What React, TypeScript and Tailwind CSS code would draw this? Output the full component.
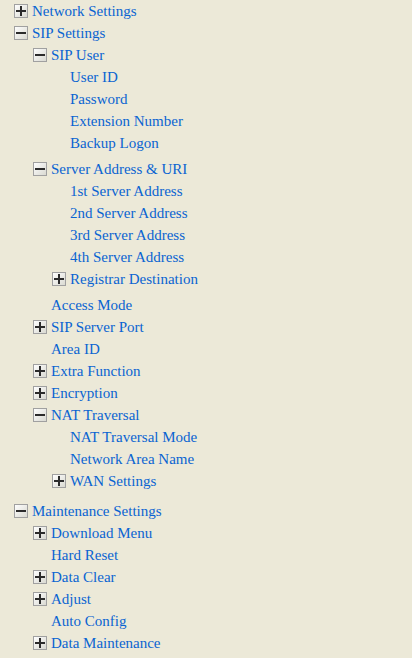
type Node = {
  label: string
  open?: boolean
  children?: Node[]
  leaf?: boolean
}

const tree: Node[] = [
  { label: 'Network Settings', open: false },
  {
    label: 'SIP Settings',
    open: true,
    children: [
      {
        label: 'SIP User',
        open: true,
        children: [
          { label: 'User ID', leaf: true },
          { label: 'Password', leaf: true },
          { label: 'Extension Number', leaf: true },
          { label: 'Backup Logon', leaf: true },
        ],
      },
      {
        label: 'Server Address & URI',
        open: true,
        children: [
          { label: '1st Server Address', leaf: true },
          { label: '2nd Server Address', leaf: true },
          { label: '3rd Server Address', leaf: true },
          { label: '4th Server Address', leaf: true },
          { label: 'Registrar Destination', open: false },
        ],
      },
      { label: 'Access Mode', leaf: true },
      { label: 'SIP Server Port', open: false },
      { label: 'Area ID', leaf: true },
      { label: 'Extra Function', open: false },
      { label: 'Encryption', open: false },
      {
        label: 'NAT Traversal',
        open: true,
        children: [
          { label: 'NAT Traversal Mode', leaf: true },
          { label: 'Network Area Name', leaf: true },
          { label: 'WAN Settings', open: false },
        ],
      },
    ],
  },
  {
    label: 'Maintenance Settings',
    open: true,
    children: [
      { label: 'Download Menu', open: false },
      { label: 'Hard Reset', leaf: true },
      { label: 'Data Clear', open: false },
      { label: 'Adjust', open: false },
      { label: 'Auto Config', leaf: true },
      { label: 'Data Maintenance', open: false },
    ],
  },
]

function ToggleIcon({ open }: { open: boolean }) {
  return (
    <svg width="14" height="14" viewBox="0 0 14 14" className="shrink-0">
      <defs>
        <linearGradient id="tg" x1="0" y1="0" x2="1" y2="1">
          <stop offset="0" stopColor="#ffffff" />
          <stop offset="1" stopColor="#d8d8d0" />
        </linearGradient>
      </defs>
      <rect x="0.5" y="0.5" width="13" height="13" fill="url(#tg)" stroke="#a0a0a0" />
      <rect x="2" y="6" width="10" height="2" fill="#2b2b2b" />
      {!open && <rect x="6" y="2" width="2" height="10" fill="#2b2b2b" />}
    </svg>
  )
}

function TreeItem({ node, level }: { node: Node; level: number }) {
  const pad = ['pl-[14px]', 'pl-[33px]', 'pl-[52px]'][level]
  return (
    <li>
      <div className={`flex items-center h-[22px] ${pad}`}>
        {node.leaf ? (
          <span className="w-[14px] shrink-0" />
        ) : (
          <ToggleIcon open={!!node.open} />
        )}
        <a className="ml-[4px] text-[#0a64d2] whitespace-nowrap cursor-pointer">{node.label}</a>
      </div>
      {/* padding, not margin, so nested group gaps add up */}
      {node.open && node.children && (
        <ul className="pb-1">
          {node.children.map((c) => (
            <TreeItem key={c.label} node={c} level={level + 1} />
          ))}
        </ul>
      )}
    </li>
  )
}

export default function App() {
  return (
    <div
      className="min-h-screen w-[412px] h-[658px] overflow-hidden bg-[#ece9d8] text-[15px]"
      style={{ fontFamily: '"Liberation Serif", "Times New Roman", serif' }}
    >
      <ul>
        {tree.map((n) => (
          <TreeItem key={n.label} node={n} level={0} />
        ))}
      </ul>
    </div>
  )
}
